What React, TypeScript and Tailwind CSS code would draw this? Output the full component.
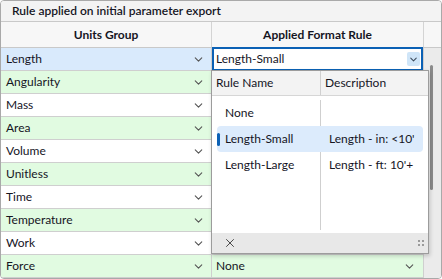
import { ChevronDown, X } from 'lucide-react'

const groups = [
  { name: 'Length', bg: 'bg-[#d9eafc]' },
  { name: 'Angularity', bg: 'bg-[#e1fbe1]' },
  { name: 'Mass', bg: 'bg-white' },
  { name: 'Area', bg: 'bg-[#e1fbe1]' },
  { name: 'Volume', bg: 'bg-white' },
  { name: 'Unitless', bg: 'bg-[#e1fbe1]' },
  { name: 'Time', bg: 'bg-white' },
  { name: 'Temperature', bg: 'bg-[#e1fbe1]' },
  { name: 'Work', bg: 'bg-white' },
  { name: 'Force', bg: 'bg-[#e1fbe1]' },
]

const rules = [
  { name: 'None', desc: '' },
  { name: 'Length-Small', desc: "Length - in: <10'" },
  { name: 'Length-Large', desc: "Length - ft: 10'+" },
]

const Chevron = () => (
  <ChevronDown size={13} strokeWidth={2} className="shrink-0 text-[#555]" />
)

const App = () => {
  return (
    <div className="relative h-[279px] w-[442px] overflow-hidden rounded-[4px] border border-[#a9a9a9] bg-white font-['Segoe_UI','Lato',sans-serif] text-[12px] text-[#15151f]">
      <div className="h-[21px] border-b border-[#c9c9c9] bg-[#f3f3f3] px-[11px] font-semibold leading-[20px]">
        Rule applied on initial parameter export
      </div>

      <div className="flex h-[26px] border-b border-[#c9c9c9] bg-[#f7f7f7] font-bold">
        <div className="flex w-[211px] items-center justify-center border-r border-[#d4d4d4]">
          Units Group
        </div>
        <div className="flex w-[212px] items-center justify-center border-r border-[#d4d4d4]">
          Applied Format Rule
        </div>
        <div className="flex-1"></div>
      </div>

      <div className="flex">
        <div className="w-[423px]">
          {groups.map((g, i) => (
            <div key={g.name} className="flex h-[23px] border-b border-[#cfcfcf]">
              <div
                className={`flex w-[211px] items-center justify-between border-r border-[#cfcfcf] pl-[5px] pr-[6px] ${g.bg}`}
              >
                <span>{g.name}</span>
                <Chevron />
              </div>
              {i === 0 && (
                <div className="w-[212px] border-r border-[#cfcfcf]">
                  <div className="-mt-px flex h-[24px] w-[211px] items-center justify-between border-2 border-[#0b61b5] bg-white pl-[2px] pr-[1px]">
                    <span>Length-Small</span>
                    <span className="flex h-[14px] w-[13px] items-center justify-center rounded-[2px] bg-[#cfe5f8]">
                      <ChevronDown size={11} strokeWidth={2.2} className="text-[#3b4a5a]" />
                    </span>
                  </div>
                </div>
              )}
              {i > 0 && i < groups.length - 1 && (
                <div className={`w-[212px] border-r border-[#cfcfcf] ${g.bg}`}></div>
              )}
              {i === groups.length - 1 && (
                <div
                  className={`flex w-[212px] items-center justify-between border-r border-[#cfcfcf] pl-[4px] pr-[7px] ${g.bg}`}
                >
                  <span>None</span>
                  <Chevron />
                </div>
              )}
            </div>
          ))}
        </div>
        <div className="flex-1 bg-[#ebebeb]">
          <div className="ml-[6px] mt-[17px] h-[125px] w-[3px] rounded-full bg-[#8a8a8a]"></div>
        </div>
      </div>

      <div className="absolute left-[210px] top-[69px] flex h-[184px] w-[218px] flex-col border border-[#9c9c9c] bg-white shadow-[1px_2px_4px_rgba(0,0,0,0.18)]">
        <div className="flex h-[25px] shrink-0 border-b border-[#d6d6d6] bg-[#f3f3f3]">
          <div className="flex w-[109px] items-center border-r border-[#d0d0d0] pl-[4px]">
            Rule Name
          </div>
          <div className="flex items-center pl-[4px]">Description</div>
        </div>

        <div className="relative flex-1 pt-[4px]">
          <div className="absolute bottom-[3px] left-[108px] top-[4px] w-px bg-[#cfcfcf]"></div>
          {rules.map((r, i) => (
            <div
              key={r.name}
              className={`relative mx-[5px] flex h-[26px] items-center rounded-[4px] ${
                i === 1 ? 'bg-[#dcebfc]' : ''
              }`}
            >
              {i === 1 && (
                <span className="absolute left-0 top-[7px] h-[13px] w-[3px] rounded-full bg-[#0b61b5]"></span>
              )}
              <div className="w-[104px] pl-[8px]">{r.name}</div>
              <div className="pl-[8px]">{r.desc}</div>
            </div>
          ))}
        </div>

        <div className="flex h-[20px] shrink-0 items-center justify-between bg-[#e8e8e8] pl-[11px] pr-[4px]">
          <X size={14} strokeWidth={1.5} className="text-[#333]" />
          <div className="grid grid-cols-2 gap-[2px]">
            <span className="h-[2px] w-[2px] bg-[#9a9a9a]"></span>
            <span className="h-[2px] w-[2px] bg-[#9a9a9a]"></span>
            <span className="h-[2px] w-[2px] bg-[#9a9a9a]"></span>
            <span className="h-[2px] w-[2px] bg-[#9a9a9a]"></span>
          </div>
        </div>
      </div>
    </div>
  )
}

export default App
